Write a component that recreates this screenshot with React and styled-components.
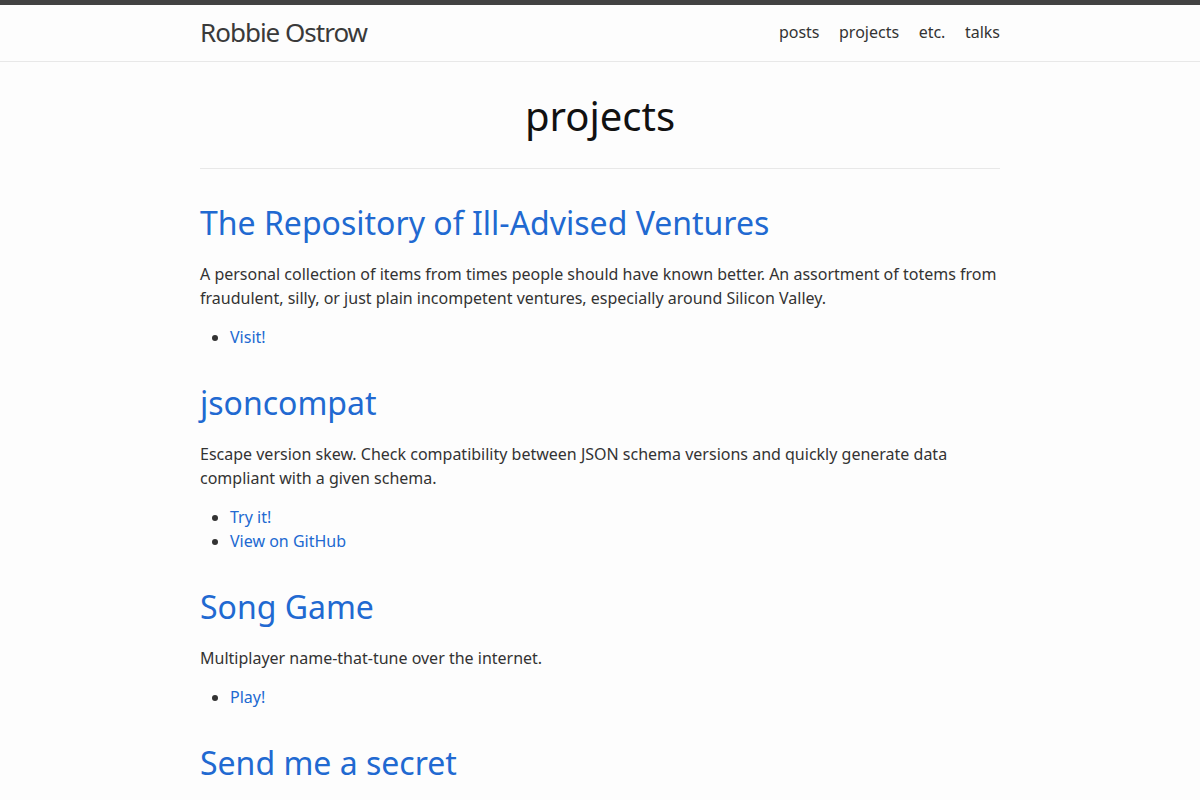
import React from "react";
import styled, { createGlobalStyle } from "styled-components";

const Global = createGlobalStyle`
  html, body { margin: 0; padding: 0; }
  body {
    background: #fdfdfd;
    color: #333;
    font-family: "Noto Sans", "Open Sans", sans-serif;
    font-size: 16px;
    line-height: 1.5;
  }
  * { box-sizing: border-box; }
`;

const Header = styled.header`
  border-top: 5px solid #424242;
  border-bottom: 1px solid #e8e8e8;
`;

const Wrapper = styled.div`
  width: 800px;
  margin: 0 auto;
`;

const HeaderInner = styled(Wrapper)`
  display: flex;
  align-items: flex-start;
  justify-content: space-between;
  height: 56px;
`;

const SiteTitle = styled.a`
  font-size: 26px;
  font-weight: 400;
  letter-spacing: -1px;
  line-height: 54px;
  color: #3a3a3a;
  text-decoration: none;
`;

const Nav = styled.nav`
  display: flex;
  gap: 19.5px;
  line-height: 54px;
`;

const NavLink = styled.a`
  color: #333;
  text-decoration: none;
  font-size: 16px;
`;

const Main = styled(Wrapper)`
  padding-top: 30px;
`;

const PageTitle = styled.h1`
  margin: 0;
  font-size: 40px;
  font-weight: 400;
  line-height: 48px;
  text-align: center;
  color: #111;
`;

const Rule = styled.hr`
  margin: 28px 0 0;
  border: 0;
  border-top: 1px solid #e8e8e8;
`;

const Project = styled.section`
  padding-top: 30px;
  & + & { padding-top: 15px; }
`;

const ProjectTitle = styled.h2`
  margin: 0 0 15px;
  font-size: 32px;
  font-weight: 400;
  line-height: 48px;
  a { color: #2169d1; text-decoration: none; }
`;

const Desc = styled.p`
  margin: 0 0 15px;
`;

const Links = styled.ul`
  margin: 0 0 15px;
  padding-left: 30px;
  a { color: #2169d1; text-decoration: none; }
`;

const projects = [
  {
    title: "The Repository of Ill-Advised Ventures",
    desc: "A personal collection of items from times people should have known better. An assortment of totems from fraudulent, silly, or just plain incompetent ventures, especially around Silicon Valley.",
    links: ["Visit!"],
  },
  {
    title: "jsoncompat",
    desc: "Escape version skew. Check compatibility between JSON schema versions and quickly generate data compliant with a given schema.",
    links: ["Try it!", "View on GitHub"],
  },
  {
    title: "Song Game",
    desc: "Multiplayer name-that-tune over the internet.",
    links: ["Play!"],
  },
  {
    title: "Send me a secret",
    desc: "",
    links: [],
  },
];

export default function App() {
  return (
    <>
      <Global />
      <Header>
        <HeaderInner>
          <SiteTitle href="#">Robbie Ostrow</SiteTitle>
          <Nav>
            <NavLink href="#">posts</NavLink>
            <NavLink href="#">projects</NavLink>
            <NavLink href="#">etc.</NavLink>
            <NavLink href="#">talks</NavLink>
          </Nav>
        </HeaderInner>
      </Header>
      <Main>
        <PageTitle>projects</PageTitle>
        <Rule />
        {projects.map((p) => (
          <Project key={p.title}>
            <ProjectTitle>
              <a href="#">{p.title}</a>
            </ProjectTitle>
            {p.desc && <Desc>{p.desc}</Desc>}
            {p.links.length > 0 && (
              <Links>
                {p.links.map((l) => (
                  <li key={l}>
                    <a href="#">{l}</a>
                  </li>
                ))}
              </Links>
            )}
          </Project>
        ))}
      </Main>
    </>
  );
}
